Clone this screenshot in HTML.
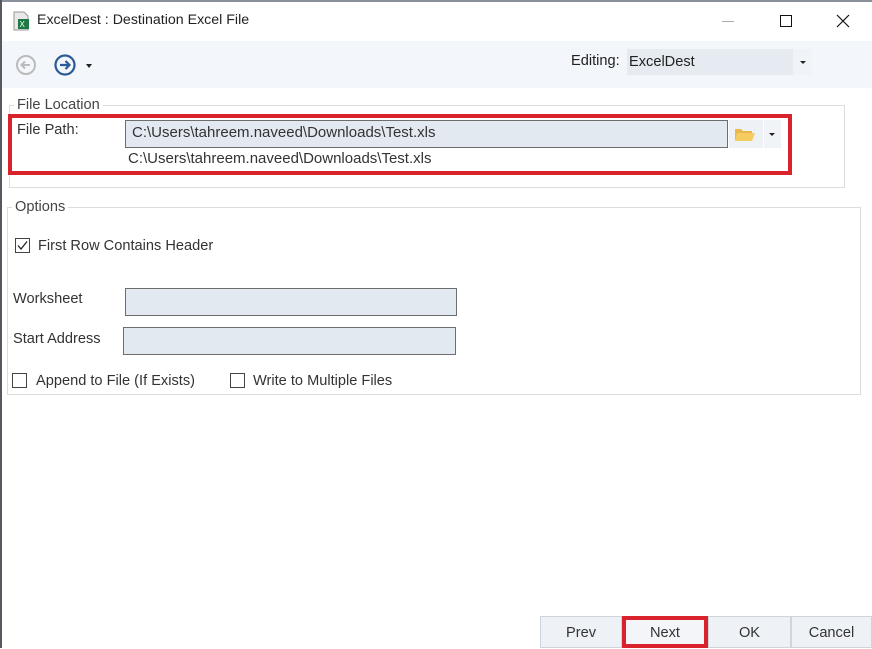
<!DOCTYPE html>
<html><head><style>
*{margin:0;padding:0;box-sizing:border-box}
body{width:872px;height:648px;background:#fff;font-family:"Liberation Sans",sans-serif;font-size:14.6px;color:#222;position:relative;overflow:hidden}
.a{position:absolute}
.lbl{font-size:14.6px;color:#333}
.inp{background:#e3e9f0;border:1px solid #6e6e6e}
.cb{width:15px;height:15px;border:1px solid #444;background:#fff}
.btn{position:absolute;top:616px;height:32px;background:#eef1f5;border:1px solid #d0d5dc;font-size:14.6px;text-align:center;line-height:32px;color:#333}
</style></head><body>
<div class="a" style="left:0;top:0;width:872px;height:2px;background:#8a9099"></div>
<div class="a" style="left:0;top:0;width:2px;height:648px;background:#555a60"></div>
<svg class="a" style="left:12px;top:11px" width="20" height="20"><path d="M2 1h10l4 4v14H2z" fill="#e8e8e8" stroke="#999"/><rect x="6" y="8" width="11" height="10" fill="#1e7a45"/><text x="7.5" y="16" font-size="8" fill="#fff" font-family="Liberation Sans">X</text></svg>
<div class="a" style="left:37px;top:12px;font-size:14.2px;color:#222">ExcelDest : Destination Excel File</div>
<div class="a" style="left:722px;top:21px;width:12px;height:1px;background:#aaa"></div>
<div class="a" style="left:780px;top:15px;width:12px;height:12px;border:1px solid #111"></div>
<svg class="a" style="left:836px;top:14px" width="14" height="14"><path d="M1 1L13 13M13 1L1 13" stroke="#111" stroke-width="1.2"/></svg>
<div class="a" style="left:2px;top:41px;width:870px;height:47px;background:#f3f6fa"></div>
<svg class="a" style="left:15px;top:54px" width="22" height="22"><circle cx="11" cy="11" r="9" fill="none" stroke="#bbb" stroke-width="2"/><path d="M15 11H7M10 7.5L6.5 11L10 14.5" fill="none" stroke="#bbb" stroke-width="2"/></svg>
<svg class="a" style="left:53px;top:53px" width="24" height="24"><circle cx="12" cy="12" r="9.5" fill="none" stroke="#2c5a96" stroke-width="2.2"/><path d="M7 12H16M12.5 8L16.5 12L12.5 16" fill="none" stroke="#2c5a96" stroke-width="2.2"/></svg>
<div class="a" style="left:86px;top:64px;border-left:3px solid transparent;border-right:3px solid transparent;border-top:4px solid #222"></div>
<div class="a" style="left:571px;top:53px;font-size:14.6px">Editing:</div>
<div class="a" style="left:627px;top:49px;width:185px;height:26px;background:#e6ebf1"></div>
<div class="a" style="left:629px;top:54px;font-size:14.6px">ExcelDest</div>
<div class="a" style="left:793px;top:49px;width:19px;height:26px;background:#f0f3f7"></div>
<div class="a" style="left:800px;top:61px;border-left:3px solid transparent;border-right:3px solid transparent;border-top:3px solid #222"></div>
<div class="a" style="left:9px;top:105px;width:836px;height:83px;border:1px solid #dcdcdc"></div>
<div class="a" style="left:14px;top:97px;background:#fff;padding:0 3px;font-size:14.6px;color:#444">File Location</div>
<div class="a" style="left:8px;top:114px;width:784px;height:61px;border:4px solid #d8222c"></div>
<div class="a lbl" style="left:17px;top:122px">File Path:</div>
<div class="a inp" style="left:125px;top:120px;width:603px;height:28px"></div>
<div class="a" style="left:132px;top:124px;font-size:15px;color:#333">C:\Users\tahreem.naveed\Downloads\Test.xls</div>
<div class="a" style="left:729px;top:120px;width:34px;height:28px;background:#eef1f5"></div>
<svg class="a" style="left:734px;top:126px" width="22" height="16"><path d="M1 3h6l2 2h9v9H1z" fill="#e8b84a"/><path d="M3 7h18l-3 8H1z" fill="#f5cc60"/></svg>
<div class="a" style="left:764px;top:120px;width:17px;height:28px;background:#f0f3f7"></div>
<div class="a" style="left:769px;top:133px;border-left:3px solid transparent;border-right:3px solid transparent;border-top:3px solid #222"></div>
<div class="a" style="left:128px;top:150px;font-size:15px;color:#333">C:\Users\tahreem.naveed\Downloads\Test.xls</div>
<div class="a" style="left:7px;top:207px;width:854px;height:188px;border:1px solid #dcdcdc"></div>
<div class="a" style="left:12px;top:199px;background:#fff;padding:0 3px;font-size:14.6px;color:#444">Options</div>
<div class="a cb" style="left:15px;top:238px"></div>
<svg class="a" style="left:15px;top:238px" width="15" height="15"><path d="M3 7.5L6 11L12 3.5" fill="none" stroke="#222" stroke-width="1.3"/></svg>
<div class="a lbl" style="left:38px;top:238px">First Row Contains Header</div>
<div class="a lbl" style="left:13px;top:291px">Worksheet</div>
<div class="a inp" style="left:125px;top:288px;width:332px;height:28px"></div>
<div class="a lbl" style="left:13px;top:331px">Start Address</div>
<div class="a inp" style="left:123px;top:327px;width:333px;height:28px"></div>
<div class="a cb" style="left:12px;top:373px"></div>
<div class="a lbl" style="left:36px;top:373px">Append to File (If Exists)</div>
<div class="a cb" style="left:230px;top:373px"></div>
<div class="a lbl" style="left:253px;top:373px">Write to Multiple Files</div>
<div class="btn" style="left:540px;width:82px">Prev</div>
<div class="btn" style="left:622px;width:86px;background:#f3f5f8;border:4px solid #d8222c;line-height:27px">Next</div>
<div class="btn" style="left:708px;width:83px">OK</div>
<div class="btn" style="left:791px;width:81px">Cancel</div>
</body></html>
